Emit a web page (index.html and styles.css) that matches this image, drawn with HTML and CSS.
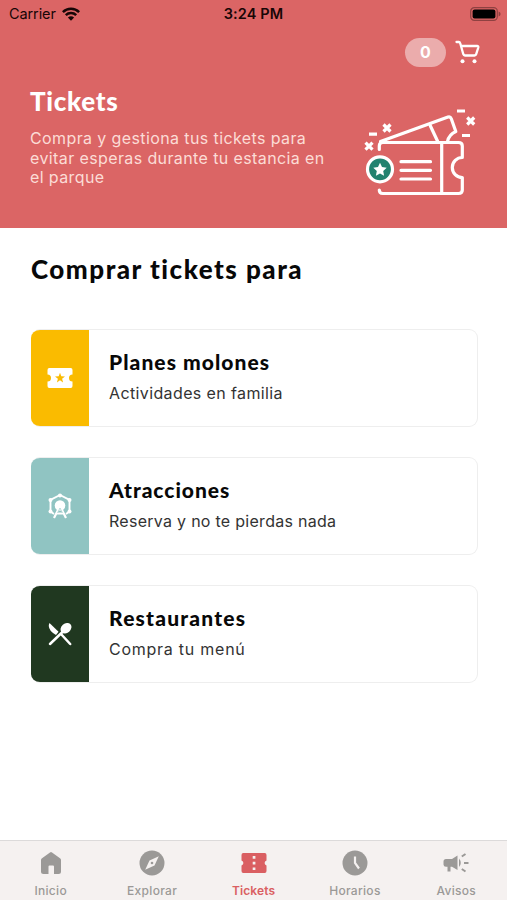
FILE: index.html
```html
<!DOCTYPE html>
<html lang="es">
<head>
    <meta charset="UTF-8">
    <meta name="viewport" content="width=device-width, initial-scale=1.0">
    <title>Tickets</title>
    <link rel="stylesheet" href="styles.css">
</head>
<body>
    <header class="hero">
        <div class="status">
            <div class="carrier">
                <span>Carrier</span>
                <svg width="18" height="14" viewBox="0 0 18 14" fill="none" stroke="#170606" stroke-width="2.5">
                    <path d="M.9 5.1a11.5 11.5 0 0 1 16.2 0M3.8 8.2a7.4 7.4 0 0 1 10.4 0"/>
                    <path d="M9 13.7L5.9 10.6a4.5 4.5 0 0 1 6.2 0z" fill="#170606" stroke="none"/>
                </svg>
            </div>
            <span class="time">3:24 PM</span>
            <svg class="battery" width="31" height="14" viewBox="0 0 31 14">
                <rect x=".7" y=".7" width="26.6" height="12.6" rx="3.6" fill="none" stroke="#8f4141" stroke-width="1.2"/>
                <rect x="2.6" y="2.4" width="22.8" height="9.2" rx="2" fill="#000"/>
                <path d="M28.6 4.6q2 .8 2 2.4t-2 2.4z" fill="#8f4141"/>
            </svg>
        </div>
        <div class="toolbar">
            <span class="count">0</span>
            <svg width="25" height="24" viewBox="0 0 25 24" fill="none" stroke="#fff" stroke-width="2.3" stroke-linecap="round" stroke-linejoin="round">
                <path d="M1.5 2H3.8Q4.8 2 5.3 3.5L8.3 14.2Q8.7 15.5 10 15.5H19.5Q20.8 15.5 21.2 14.2L23.3 7.5Q23.7 6 22.1 6H6.2"/>
                <circle cx="7.5" cy="21.3" r="2" fill="#fff" stroke="none"/>
                <circle cx="19.5" cy="21.3" r="2" fill="#fff" stroke="none"/>
            </svg>
        </div>
        <div class="intro">
            <div class="intro-text">
                <h1>Tickets</h1>
                <p>Compra y gestiona tus tickets para<br>evitar esperas durante tu estancia en<br>el parque</p>
            </div>
            <svg class="art" width="112" height="92" viewBox="0 0 112 92" fill="none" stroke="#fff" stroke-width="3.2" stroke-linejoin="round" stroke-linecap="round">
                <!-- back ticket -->
                <path d="M16.5 37.5L84 13Q86.3 12.2 87.2 14.5L91.8 27.5Q85 30.5 83.5 37.5M66.3 21.7L73.5 37"/>
                <!-- front ticket -->
                <path d="M15.3 45.5V42Q15.3 38.5 18.8 38.5H94.5Q98.3 38.5 98.3 42V53.5A10 10 0 0 0 98.3 73.5V86Q98.3 89.5 94.5 89.5H18.8Q15.3 89.5 15.3 86"/>
                <path d="M77.7 38.5V89.5M37 57.7H66.5M37 66.3H66.5M37 75H66.5"/>
                <circle cx="16" cy="65.3" r="12.5" fill="#22826f"/>
                <path fill="#fff" stroke="none" d="M16 58.8l2 4.3 4.7.6-3.5 3.3.9 4.7-4.1-2.3-4.1 2.3.9-4.7-3.5-3.3 4.7-.6z"/>
                <g stroke-linecap="butt">
                    <path d="M93 7H101M98 31.5H106M5 30.2H13"/>
                    <path d="M103.2 13.5l7 7m0-7l-7 7M19.5 20.5l7 7m0-7l-7 7M1.5 38.7l7 7m0-7l-7 7"/>
                </g>
            </svg>
        </div>
    </header>

    <main>
        <h2>Comprar tickets para</h2>

        <a class="card">
            <div class="card-icon yellow">
                <svg width="26" height="20" viewBox="0 0 26 20">
                    <path fill="#fff" d="M2.3 0H23.7Q25.5 0 25.5 2V6.500A3.500 3.500 0 0 0 25.500 13.500V18Q25.500 20 23.700 20H2.300Q.5 20 .5 18V13.500A3.500 3.500 0 0 0 .5 6.500V2Q.5 0 2.300 0z"/>
                    <path fill="#fabb00" d="M13 4.800l1.300 3.500 3.700.2-2.900 2.300 1 3.600-3.100-2.100-3.100 2.100 1-3.600L8 8.500l3.700-.2z"/>
                </svg>
            </div>
            <div class="card-text">
                <h3 class="planes">Planes molones</h3>
                <p>Actividades en familia</p>
            </div>
        </a>

        <a class="card">
            <div class="card-icon teal">
                <svg width="24" height="26" viewBox="0 0 24 26" fill="none" stroke="#fff">
                    <path d="M6 21L2.5 18.5V6.8L12 2 21.5 6.8V18.5L18 21" stroke-width="1.9"/>
                    <path d="M12 13L6 25M12 13L18 25M9 20.5H15" stroke-width="2.2"/>
                    <g fill="#fff" stroke="none">
                        <circle cx="12" cy="12.5" r="5.3"/>
                        <circle cx="12" cy="2.4" r="2"/>
                        <circle cx="2.5" cy="7" r="2"/>
                        <circle cx="21.5" cy="7" r="2"/>
                        <circle cx="2.5" cy="18.5" r="2"/>
                        <circle cx="21.5" cy="18.5" r="2"/>
                    </g>
                    <path d="M12 15L9.5 20M12 15L14.5 20" stroke="#90c4c2" stroke-width=".6"/>
                </svg>
            </div>
            <div class="card-text">
                <h3 class="atracciones">Atracciones</h3>
                <p class="reserva">Reserva y no te pierdas nada</p>
            </div>
        </a>

        <a class="card">
            <div class="card-icon green">
                <svg width="24" height="24" viewBox="0 0 24 24">
                    <path d="M13 12L22.2 22M2 22L15 9.5" stroke="#fff" stroke-width="2.5" stroke-linecap="round"/>
                    <path fill="#fff" d="M1.5 1L10.5 9.8 8 13Q-1.500 7 1.500 1z"/>
                    <ellipse cx="18" cy="6.2" rx="6" ry="4.7" fill="#fff" transform="rotate(-42 18 6.2)"/>
                </svg>
            </div>
            <div class="card-text">
                <h3 class="restaurantes">Restaurantes</h3>
                <p class="menu">Compra tu menú</p>
            </div>
        </a>
    </main>

    <nav class="tabs">
        <a class="tab">
            <svg width="26" height="26" viewBox="0 0 26 26"><path fill="#9b9997" d="M3 10Q3 9 4 8.2L12 2.400Q13 1.700 14 2.400L22 8.200Q23 9 23 10V21.500Q23 24 20.500 24H16V16.500Q16 15.500 15 15.500H11.500Q10.500 15.500 10.500 16.500V24H5.500Q3 24 3 21.500z"/></svg>
            <span>Inicio</span>
        </a>
        <a class="tab">
            <svg width="26" height="26" viewBox="0 0 26 26">
                <circle cx="13" cy="13" r="12.5" fill="#9b9997"/>
                <path fill="#f5f1f0" d="M19.8 6.2L15.5 15.5 6.2 19.8 10.5 10.5z"/>
                <circle cx="13" cy="13" r="1.3" fill="#9b9997"/>
            </svg>
            <span>Explorar</span>
        </a>
        <a class="tab active">
            <svg width="26" height="26" viewBox="0 0 26 26">
                <path fill="#da5f62" d="M2.3 3H23.7Q25.5 3 25.5 5V10.500A2.600 2.600 0 0 0 25.500 15.500V21Q25.500 23 23.700 23H2.300Q.5 23 .5 21V15.500A2.600 2.600 0 0 0 .5 10.500V5Q.5 3 2.300 3z"/>
                <path fill="#f5f1f0" d="M11.7 6h2.7v2.7h-2.7zM11.7 11.7h2.7v2.7h-2.7zM11.7 17.4h2.7v2.7h-2.7z"/>
            </svg>
            <span>Tickets</span>
        </a>
        <a class="tab">
            <svg width="26" height="26" viewBox="0 0 26 26">
                <circle cx="13" cy="13" r="12.5" fill="#9b9997"/>
                <path d="M13 6.5V13L17 18.5" fill="none" stroke="#f5f1f0" stroke-width="2.2"/>
            </svg>
            <span>Horarios</span>
        </a>
        <a class="tab">
            <svg width="26" height="26" viewBox="0 0 26 26" fill="#9b9997">
                <path d="M3 9H9L14.5 5.5V20L9 16.8H7.5V21.5H4.5V16.8H3Q.5 16.8 .5 14.5V11.5Q.5 9 3 9z"/>
                <path d="M16 8.5q3.5 4.3 0 8.6z"/>
                <path d="M18.8 6.5L22.5 4M21 13H25.5M18.8 19L22.5 21.5" stroke="#9b9997" stroke-width="2"/>
            </svg>
            <span>Avisos</span>
        </a>
    </nav>
</body>
</html>
```

FILE: styles.css
```css
* {
    box-sizing: border-box;
}
body {
    margin: 0;
    height: 900px;
    display: flex;
    flex-direction: column;
    background-color: #fff;
    color: #080808;
    font-family: Inter, sans-serif;
    overflow: hidden;
}
h1, h2, h3, p {
    margin: 0;
}
h1, h2, h3 {
    font-family: Lato, sans-serif;
    font-weight: 900;
}
svg {
    display: block;
    flex: none;
}
.hero {
    height: 228px;
    background-color: #db6565;
    color: #fff;
}
.status {
    height: 27px;
    display: grid;
    grid-template-columns: 1fr auto 1fr;
    align-items: center;
    padding: 0 6px 0 9px;
    color: #170606;
    font-size: 14.5px;
}
.carrier {
    display: flex;
    align-items: center;
    gap: 6px;
    letter-spacing: -0.1px;
}
.time {
    font-weight: 600;
    margin-left: -3px;
    letter-spacing: 0.1px;
}
.battery {
    justify-self: end;
}
.toolbar {
    height: 50px;
    display: flex;
    justify-content: flex-end;
    align-items: center;
    gap: 9px;
    padding-right: 27px;
}
.count {
    width: 41px;
    height: 29px;
    border-radius: 15px;
    background-color: #ebacac;
    text-align: center;
    font-size: 16px;
    line-height: 29px;
    font-weight: 700;
}
.intro {
    display: flex;
    justify-content: space-between;
    padding: 9px 31px 0 30px;
}
.intro-text {
    white-space: nowrap;
}
h1 {
    font-size: 26px;
    line-height: 30px;
    letter-spacing: 0.7px;
}
.intro p {
    margin-top: 13px;
    color: #fbdcd6;
    font-size: 16px;
    line-height: 19.5px;
    letter-spacing: 0.39px;
}
.art {
    margin-top: 18px;
    overflow: visible;
}
main {
    flex: 1;
    padding: 25px 29px 0 31px;
}
h2 {
    height: 75.5px;
    font-size: 26px;
    line-height: 32px;
    letter-spacing: 1.5px;
}
.card {
    display: flex;
    height: 98px;
    margin-bottom: 30.3px;
    border: 1px solid #eee;
    border-left: 0;
    border-radius: 9px;
    overflow: hidden;
}
.card-icon {
    width: 58px;
    display: flex;
    align-items: center;
    justify-content: center;
    padding-right: 1px;
}
.yellow {
    background-color: #fabb00;
}
.teal {
    background-color: #90c4c2;
}
.green {
    background-color: #203820;
}
.card-text {
    padding: 18px 0 0 20px;
}
h3 {
    font-size: 21px;
    line-height: 28px;
}
.planes {
    letter-spacing: 1.05px;
}
.atracciones {
    letter-spacing: 0.95px;
}
.restaurantes {
    letter-spacing: 1.2px;
}
.card p {
    margin-top: 7px;
    color: #333;
    font-size: 16px;
    line-height: 21px;
    letter-spacing: 0.38px;
}
.card .reserva {
    letter-spacing: 0.28px;
}
.card .menu {
    letter-spacing: 0.75px;
}
.tabs {
    height: 60px;
    display: flex;
    border-top: 1px solid #dcdada;
    background-color: #f5f1f0;
}
.tab {
    flex: 1;
    display: flex;
    flex-direction: column;
    align-items: center;
    padding-top: 9px;
    color: #9b9997;
    font-size: 12px;
    line-height: 16px;
    font-weight: 500;
    letter-spacing: 0.3px;
}
.tab span {
    margin-top: 7px;
}
.active {
    color: #da5f62;
    font-weight: 600;
    letter-spacing: 0.1px;
}
```
